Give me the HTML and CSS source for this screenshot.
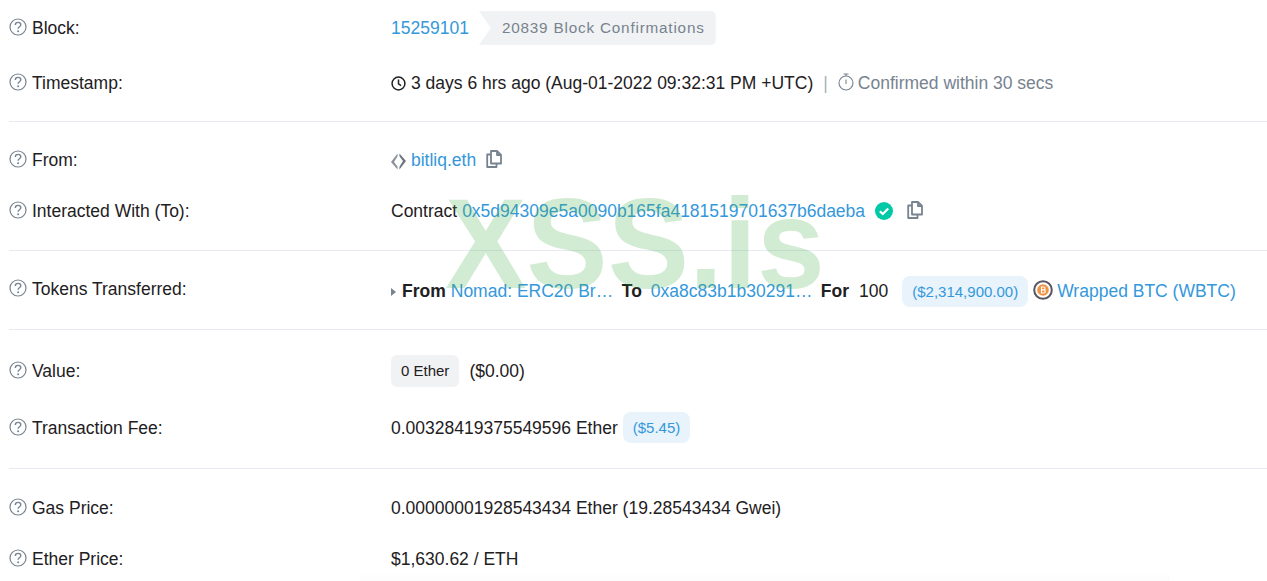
FILE: index.html

```html
<!DOCTYPE html>
<html lang="en">
<head>
    <meta charset="UTF-8">
    <meta name="viewport" content="width=device-width, initial-scale=1.0">
    <title>Transaction Details</title>
    <link rel="stylesheet" href="styles.css">
</head>
<body>
    <svg class="defs" width="0" height="0">
        <symbol id="help" viewBox="0 0 18 18">
            <circle cx="9" cy="9" r="8" fill="none" stroke="#77838f" stroke-width="1.2"/>
            <path d="M6.300 7c0-1.600 1.200-2.600 2.800-2.600s2.700 1 2.700 2.300c0 2.100-2.700 2-2.700 4" fill="none" stroke="#77838f" stroke-width="1.4"/>
            <circle cx="9.100" cy="13.300" r="1" fill="#77838f"/>
        </symbol>
        <symbol id="copy" viewBox="0 0 16 18">
            <path d="M5 1h6l4 4v8.500H5zM11 1v4h4M5 4.500H1.200V17H10.500v-3.500" fill="none" stroke="#77838f" stroke-width="1.800" stroke-linejoin="round"/>
        </symbol>
    </svg>

    <div class="section sec-one">
        <div class="row">
            <div class="label"><svg class="help"><use href="#help"/></svg>Block:</div>
            <div class="value">
                <a href="#">15259101</a>
                <span class="confirmations">20839 Block Confirmations</span>
            </div>
        </div>
        <div class="row">
            <div class="label"><svg class="help"><use href="#help"/></svg>Timestamp:</div>
            <div class="value">
                <svg class="clock" viewBox="0 0 14 14"><circle cx="7" cy="7" r="6" fill="none" stroke="#1e2022" stroke-width="1.400"/><path d="M7 3.300V7.300L9.400 9" fill="none" stroke="#1e2022" stroke-width="1.400"/></svg>
                <span>3 days 6 hrs ago (Aug-01-2022 09:32:31 PM +UTC)</span>
                <span class="divider">|</span>
                <svg class="timer" viewBox="0 0 16 18"><circle cx="8" cy="10" r="7" fill="none" stroke="#77838f" stroke-width="1.100"/><path d="M5.500 1h5M8 1v2M8 6.500v4.500" fill="none" stroke="#77838f" stroke-width="1.100"/></svg>
                <span class="muted">Confirmed within 30 secs</span>
            </div>
        </div>
    </div>

    <div class="section sec-two">
        <div class="row">
            <div class="label"><svg class="help"><use href="#help"/></svg>From:</div>
            <div class="value">
                <svg class="ens" viewBox="0 0 16 18"><path d="M7 .5 0 9.500 7 17.500 7 14.500 3.200 9.500 7 3.500z" fill="#8a939b"/><path d="M9 .5 16 8.500 9 17.500 9 14.500 12.800 8.500 9 3.500z" fill="#6b747c"/></svg>
                <a class="ens-name" href="#">bitliq.eth</a>
                <svg class="copy"><use href="#copy"/></svg>
            </div>
        </div>
        <div class="row">
            <div class="label"><svg class="help"><use href="#help"/></svg>Interacted With (To):</div>
            <div class="value">
                <span>Contract</span>
                <a class="contract" href="#">0x5d94309e5a0090b165fa4181519701637b6daeba</a>
                <svg class="verified" viewBox="0 0 18 18"><circle cx="9" cy="9" r="9" fill="#00c9a7"/><path d="M4.800 9.300 7.800 12l5.400-5.600" fill="none" stroke="#fff" stroke-width="2.200"/></svg>
                <svg class="copy copy-contract"><use href="#copy"/></svg>
            </div>
        </div>
    </div>

    <div class="section sec-three">
        <div class="row">
            <div class="label"><svg class="help"><use href="#help"/></svg>Tokens Transferred:</div>
            <div class="value tokens">
                <span class="caret"></span>
                <b class="from-word">From</b>
                <a class="clip clip-from" href="#">Nomad: ERC20 Bridge</a>
                <b class="to-word">To</b>
                <a class="clip clip-to" href="#">0xa8c83b1b30291a3a1a118058b5445cc83041cd9d</a>
                <b class="for-word">For</b>
                <span class="amount">100</span>
                <span class="usd usd-large">($2,314,900.00)</span>
                <svg class="btc" viewBox="0 0 20 20"><circle cx="10" cy="10" r="8.800" fill="#fff" stroke="#5b5560" stroke-width="2"/><circle cx="10" cy="10" r="5.800" fill="#f09242"/><path d="M8.500 6.500v7M8.500 7h2.300c1.700 0 1.700 2.900 0 2.900H8.500M10.800 9.900c2 0 2 3.100 0 3.100H8.500" fill="none" stroke="#fff" stroke-width="1.100"/></svg>
                <a class="token-name" href="#">Wrapped BTC (WBTC)</a>
            </div>
        </div>
    </div>

    <div class="section sec-four">
        <div class="row">
            <div class="label"><svg class="help"><use href="#help"/></svg>Value:</div>
            <div class="value">
                <span class="ether-pill">0 Ether</span>
                <span class="usd-plain">($0.00)</span>
            </div>
        </div>
        <div class="row">
            <div class="label"><svg class="help"><use href="#help"/></svg>Transaction Fee:</div>
            <div class="value">
                <span>0.00328419375549596 Ether</span>
                <span class="usd usd-small">($5.45)</span>
            </div>
        </div>
    </div>

    <div class="section sec-five">
        <div class="row">
            <div class="label"><svg class="help"><use href="#help"/></svg>Gas Price:</div>
            <div class="value"><span>0.00000001928543434 Ether (19.28543434 Gwei)</span></div>
        </div>
        <div class="row">
            <div class="label"><svg class="help"><use href="#help"/></svg>Ether Price:</div>
            <div class="value"><span>$1,630.62 / ETH</span></div>
        </div>
    </div>

    <div class="watermark">XSS.is</div>
    <div class="bottom-fade"></div>
</body>
</html>
```

FILE: styles.css

```css
html, body {
    height: 581px;
    overflow: hidden;
}
body {
    font-family: "Liberation Sans", Arial, sans-serif;
    font-size: 17.5px;
    margin: 0;
    padding: 0 0 0 9px;
    background-color: #fff;
    color: #1e2022;
    position: relative;
}
a {
    color: #3498db;
    text-decoration: none;
}
.defs {
    position: absolute;
}
.section {
    display: flex;
    flex-direction: column;
    border-bottom: 1px solid #e7eaf3;
}
.sec-one {
    padding: 11px 0 21px;
    gap: 21px;
}
.sec-two {
    padding: 21px 0 22px;
    gap: 17px;
}
.sec-three {
    padding: 21px 0 23px;
}
.sec-four {
    padding: 24px 0 23px;
    gap: 23px;
}
.sec-five {
    padding: 22px 0 0;
    gap: 17px;
    border-bottom: none;
}
.row {
    display: flex;
    align-items: center;
    height: 34px;
}
.label {
    display: flex;
    align-items: center;
    width: 382px;
    flex-shrink: 0;
}
.help {
    width: 18px;
    height: 18px;
    margin: -2px 5px 0 0;
}
.value {
    display: flex;
    align-items: center;
    white-space: nowrap;
}
.tokens {
    margin-top: 4px;
}
.confirmations {
    background-color: #f1f2f4;
    color: #77838f;
    font-size: 15.3px;
    letter-spacing: 0.8px;
    height: 34px;
    line-height: 34px;
    padding: 0 11px 0 23px;
    margin-left: 10px;
    border-radius: 0 5px 5px 0;
    clip-path: polygon(0 0, 100% 0, 100% 100%, 0 100%, 12px 50%);
}
.clock {
    width: 15px;
    height: 15px;
    margin-right: 5px;
    margin-top: 1px;
}
.divider {
    color: #a9b1b9;
    margin: 0 10px;
}
.timer {
    width: 16px;
    height: 18px;
    margin-right: 4px;
    margin-top: -2px;
}
.muted {
    color: #77838f;
}
.ens {
    width: 15px;
    height: 17px;
    margin: 2px 5px 0 0;
}
.copy {
    width: 16px;
    height: 18px;
    margin-left: 10px;
    margin-top: -3px;
}
.contract {
    margin-left: 5px;
}
.verified {
    width: 18px;
    height: 18px;
    margin-left: 10px;
}
.copy-contract {
    margin-left: 14px;
}
.caret {
    width: 0;
    height: 0;
    border-left: 5px solid #77838f;
    border-top: 4px solid transparent;
    border-bottom: 4px solid transparent;
    margin: 1px 6px 0 0;
}
.from-word {
    margin-right: 5px;
}
.clip {
    display: block;
    overflow: hidden;
    text-overflow: ellipsis;
}
.clip-from {
    width: 166px;
}
.to-word {
    margin: 0 9px 0 5px;
}
.clip-to {
    width: 165px;
}
.for-word {
    margin-left: 5px;
}
.amount {
    margin-left: 10px;
}
.usd {
    background-color: #e8f3fb;
    color: #3498db;
    font-size: 15px;
    border-radius: 8px;
    height: 31px;
    line-height: 31px;
    padding: 0 10px;
}
.usd-large {
    margin-left: 14px;
}
.usd-small {
    margin: -2px 0 0 5px;
}
.btc {
    width: 20px;
    height: 20px;
    margin: -3px 4px 0 5px;
}
.ether-pill {
    background-color: #f1f2f4;
    font-size: 15px;
    border-radius: 6px;
    height: 32px;
    line-height: 32px;
    padding: 0 10px;
}
.usd-plain {
    margin-left: 10px;
}
.watermark {
    position: absolute;
    left: 445px;
    top: 171px;
    font-size: 122px;
    line-height: 146px;
    font-weight: bold;
    color: rgba(76, 175, 80, 0.25);
    transform: scaleY(1.045);
    pointer-events: none;
}
.bottom-fade {
    position: absolute;
    left: 360px;
    bottom: 0;
    width: 810px;
    height: 8px;
    background: linear-gradient(#fff, #fbfbfb);
}
```
